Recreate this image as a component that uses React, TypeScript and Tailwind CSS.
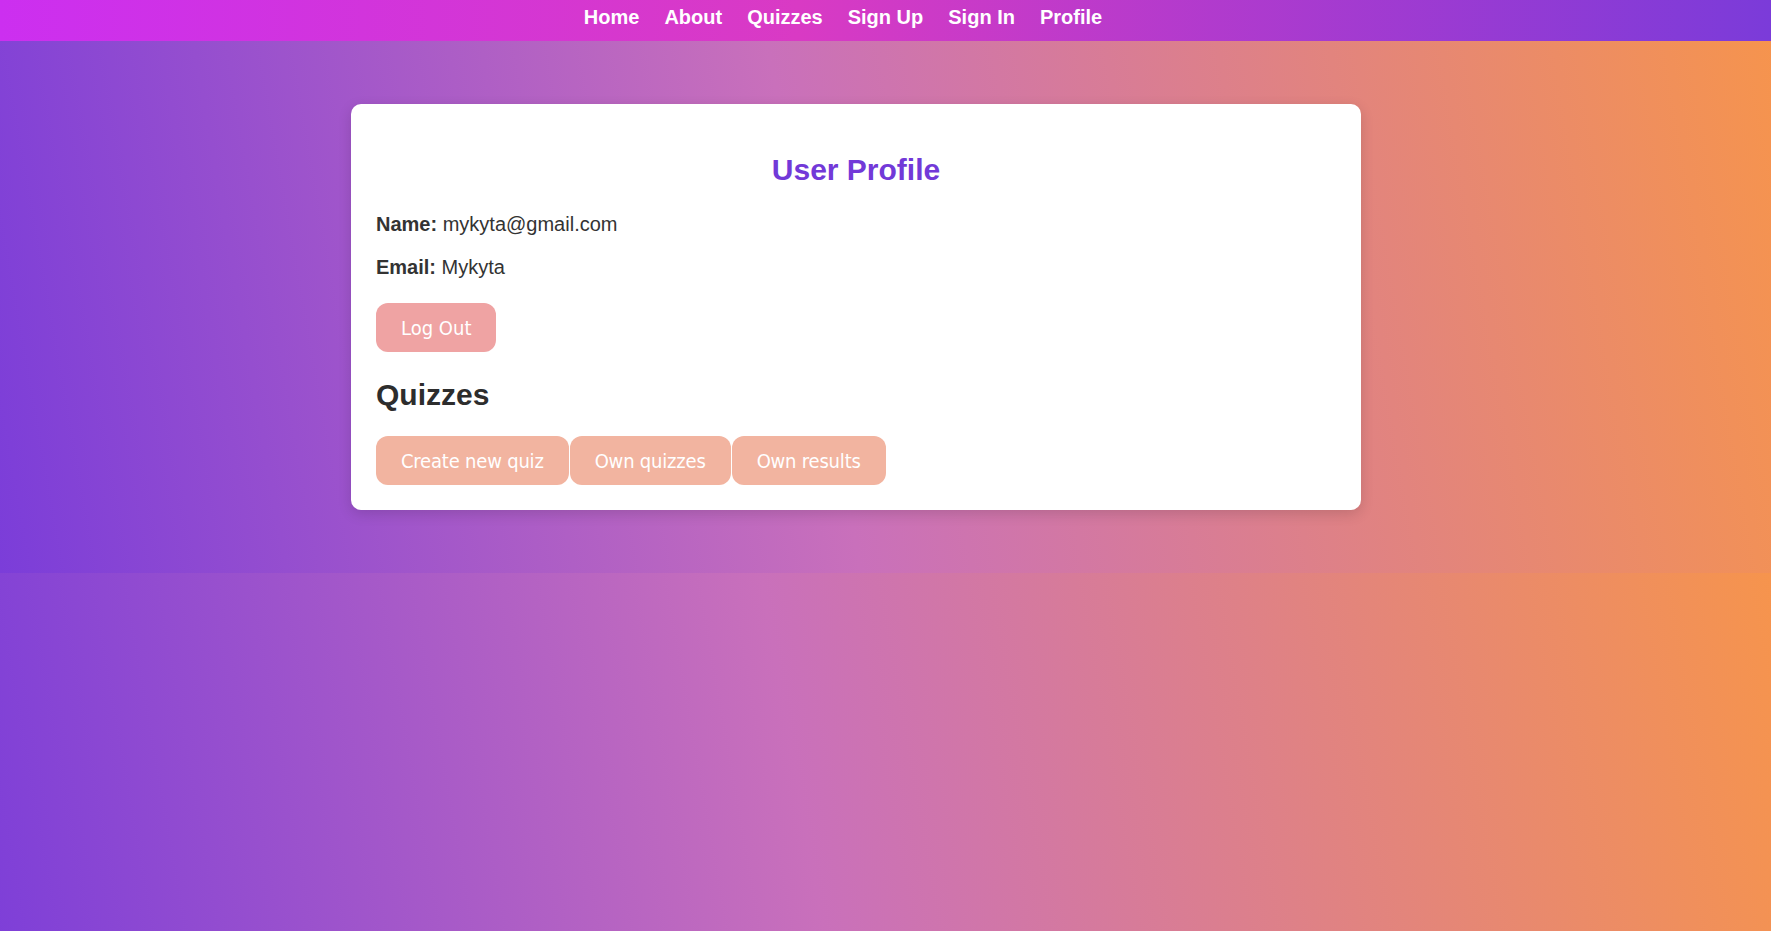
const navLinks = ["Home", "About", "Quizzes", "Sign Up", "Sign In", "Profile"];

const quizActions = ["Create new quiz", "Own quizzes", "Own results"];

const btn =
  "h-[49px] px-[25px] rounded-xl text-white text-[20px] font-['DejaVu_Sans_Condensed','DejaVu_Sans',sans-serif] font-stretch-condensed leading-none";

export default function App() {
  return (
    <div className="min-h-screen font-['Liberation_Sans',Arial,sans-serif] text-[#333] bg-[linear-gradient(80deg,#7b3dd9_0%,#c970bb_46%,#f6944d_100%)] bg-[length:100%_573px] bg-repeat">
      <nav className="h-[41px] pt-[6px] pr-[85px] flex justify-center gap-[25px] bg-[linear-gradient(90deg,#cc2ff0_0%,#d93ac4_45%,#7b3bd9_100%)]">
        {navLinks.map((link) => (
          <a key={link} href="#" className="text-white font-bold text-[20px] leading-[23px]">
            {link}
          </a>
        ))}
      </nav>

      <main className="pt-[63px] pb-16">
        <div className="ml-[351px] w-[1010px] bg-white rounded-[10px] shadow-[0_4px_14px_rgba(0,0,0,0.14)] px-[25px] pt-12 pb-[25px]">
          <h1 className="text-center text-[30px] leading-[35px] font-bold text-[#7239d8]">User Profile</h1>

          <p className="mt-[26px] text-[20px] leading-[23px]">
            <b>Name:</b> mykyta@gmail.com
          </p>
          <p className="mt-5 text-[20px] leading-[23px]">
            <b>Email:</b> Mykyta
          </p>

          <button className={`${btn} mt-6 bg-[#efa3a3]`}>Log Out</button>

          <h2 className="mt-[25px] text-[30px] leading-[35px] font-bold text-[#2d2d2d]">Quizzes</h2>

          <div className="mt-6 flex gap-px">
            {quizActions.map((label) => (
              <button key={label} className={`${btn} tracking-[-0.2px] bg-[#f2b4a0]`}>
                {label}
              </button>
            ))}
          </div>
        </div>
      </main>
    </div>
  );
}
